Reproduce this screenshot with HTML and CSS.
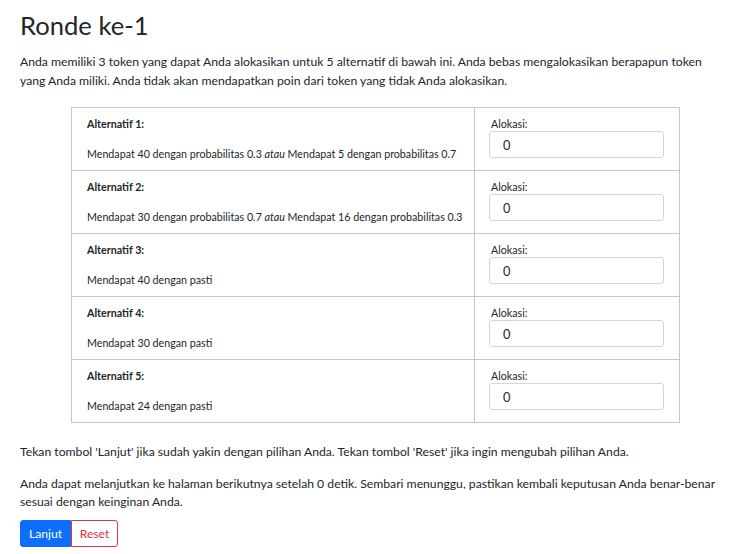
FILE: index.html
```html
<!DOCTYPE html>
<html lang="id">
<head>
<meta charset="utf-8">
<title>Ronde ke-1</title>
<link rel="stylesheet" href="styles.css">
</head>
<body>
<div class="container">
  <h2 class="title">Ronde ke-1</h2>
  <p class="intro">Anda memiliki 3 token yang dapat Anda alokasikan untuk 5 alternatif di bawah ini. Anda bebas mengalokasikan berapapun token yang Anda miliki. Anda tidak akan mendapatkan poin dari token yang tidak Anda alokasikan.</p>
  <table class="alt-table">
    <tbody>
      <tr>
        <td class="desc"><div class="alt-name">Alternatif 1:</div><div class="alt-text">Mendapat 40 dengan probabilitas 0.3 <em>atau</em> Mendapat 5 dengan probabilitas 0.7</div></td>
        <td class="alloc"><label class="alloc-label">Alokasi:</label><input class="alloc-input" type="text" value="0"></td>
      </tr>
      <tr>
        <td class="desc"><div class="alt-name">Alternatif 2:</div><div class="alt-text">Mendapat 30 dengan probabilitas 0.7 <em>atau</em> Mendapat 16 dengan probabilitas 0.3</div></td>
        <td class="alloc"><label class="alloc-label">Alokasi:</label><input class="alloc-input" type="text" value="0"></td>
      </tr>
      <tr>
        <td class="desc"><div class="alt-name">Alternatif 3:</div><div class="alt-text">Mendapat 40 dengan pasti</div></td>
        <td class="alloc"><label class="alloc-label">Alokasi:</label><input class="alloc-input" type="text" value="0"></td>
      </tr>
      <tr>
        <td class="desc"><div class="alt-name">Alternatif 4:</div><div class="alt-text">Mendapat 30 dengan pasti</div></td>
        <td class="alloc"><label class="alloc-label">Alokasi:</label><input class="alloc-input" type="text" value="0"></td>
      </tr>
      <tr>
        <td class="desc"><div class="alt-name">Alternatif 5:</div><div class="alt-text">Mendapat 24 dengan pasti</div></td>
        <td class="alloc"><label class="alloc-label">Alokasi:</label><input class="alloc-input" type="text" value="0"></td>
      </tr>
    </tbody>
  </table>
  <p class="note first">Tekan tombol 'Lanjut' jika sudah yakin dengan pilihan Anda. Tekan tombol 'Reset' jika ingin mengubah pilihan Anda.</p>
  <p class="note">Anda dapat melanjutkan ke halaman berikutnya setelah 0 detik. Sembari menunggu, pastikan kembali keputusan Anda <span class="nobr">benar-benar</span> sesuai dengan keinginan Anda.</p>
  <div class="btn-group">
    <button class="btn btn-primary" type="button">Lanjut</button>
    <button class="btn btn-outline-danger" type="button">Reset</button>
  </div>
</div>
</body>
</html>
```
FILE: styles.css
```css
* { box-sizing: border-box; }
html, body { margin: 0; padding: 0; background: #fff; }
body {
  font-family: "Lato", "Open Sans", "Liberation Sans", sans-serif;
  font-size: 12.2px;
  line-height: 18.5px;
  color: #212529;
}
.container { padding: 10px 12px 0 20px; width: 733px; }
.title {
  font-size: 25.6px;
  font-weight: 400;
  line-height: 31px;
  margin: 0 0 12px 0;
}
.intro { margin: 0 0 17px 0; }
.nobr { white-space: nowrap; }
.alt-table {
  border-collapse: collapse;
  table-layout: fixed;
  margin-left: 51px;
  width: 609px;
  font-size: 10.7px;
}
.alt-table td {
  border: 1px solid #c6c6c6;
  vertical-align: top;
  padding: 8px 15px;
}
.desc { width: 403px; }
.alt-name { font-weight: 700; line-height: 16px; }
.alt-text { line-height: 16px; margin-top: 14px; white-space: nowrap; }
.alloc-label { display: block; line-height: 15px; padding-left: 1px; }
.alloc-input {
  display: block;
  width: 175px;
  height: 27px;
  margin-left: -1px;
  border: 1px solid #d3d6d9;
  border-radius: 3px;
  padding: 0 13px;
  font-family: inherit;
  font-size: 12.8px;
  color: #212529;
}
.note { margin: 0; }
.note.first { margin: 20px 0 13px 0; }
.note + .note { margin-bottom: 8px; }
.btn-group { display: flex; }
.btn {
  font-family: inherit;
  font-size: 12.2px;
  height: 27px;
  padding: 0;
  border: 1px solid;
  cursor: pointer;
}
.btn-primary {
  background: #0d6efd;
  border-color: #0d6efd;
  color: #fff;
  border-radius: 3px 0 0 3px;
  width: 51px;
}
.btn-outline-danger {
  background: #fff;
  border-color: #dc3545;
  color: #dc3545;
  border-radius: 0 3px 3px 0;
  width: 47px;
}
```
